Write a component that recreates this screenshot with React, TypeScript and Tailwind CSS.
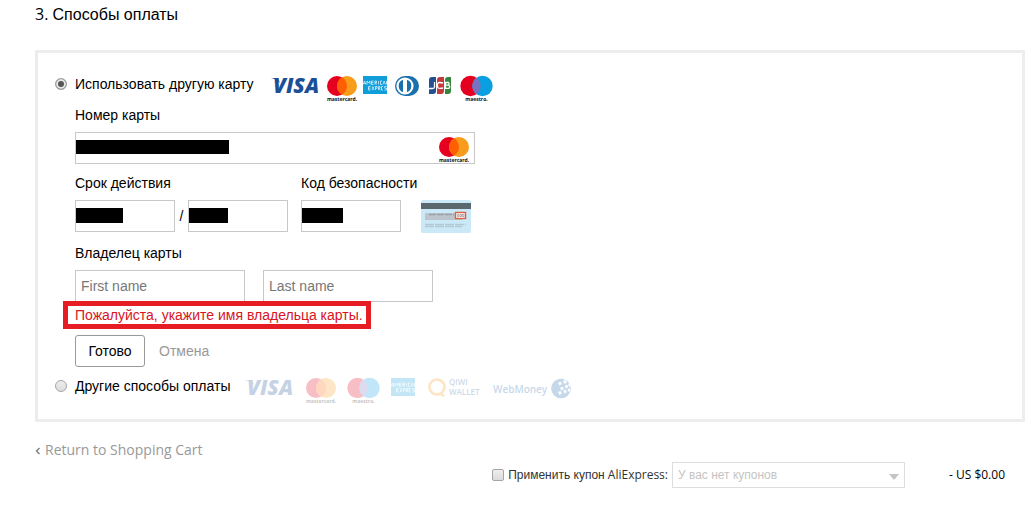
import React, { useState } from 'react';

const VisaLogo = () => (
  <svg width="50" height="26" viewBox="0 0 50 26" className="overflow-visible" role="img" aria-label="Visa">
    <text x="2" y="17" fontSize="21" fontWeight="800" fontStyle="italic" fontFamily="Open Sans, sans-serif" fill="#1d4f97">VISA</text>
    <path d="M0 2h7l2 5q-3-4-9-5z" fill="#1d4f97" />
  </svg>
);

const MastercardLogo = () => (
  <svg width="30" height="26" viewBox="0 0 30 26" className="overflow-visible" role="img" aria-label="Mastercard">
    <circle cx="10" cy="10" r="10" fill="#e6001f" />
    <circle cx="20" cy="10" r="10" fill="#f89c1c" />
    <path d="M15 1.34a10 10 0 0 1 0 17.32a10 10 0 0 1 0-17.32z" fill="#ff5f00" />
    <text x="15" y="25" fontSize="5" fontWeight="700" textAnchor="middle" fontFamily="Open Sans, sans-serif" fill="#111">mastercard.</text>
  </svg>
);

const MaestroLogo = () => (
  <svg width="33" height="26" viewBox="0 0 33 26" className="overflow-visible" role="img" aria-label="Maestro">
    <circle cx="10.5" cy="10" r="10.2" fill="#e6001f" />
    <circle cx="22.5" cy="10" r="10.2" fill="#0a9fe0" />
    <path d="M16.5 1.75a10.2 10.2 0 0 1 0 16.5a10.2 10.2 0 0 1 0-16.5z" fill="#7673c0" />
    <text x="16.5" y="25" fontSize="5" fontWeight="700" textAnchor="middle" fontFamily="Open Sans, sans-serif" fill="#111">maestro.</text>
  </svg>
);

const AmexLogo = () => (
  <svg width="26" height="26" viewBox="0 0 26 26" role="img" aria-label="American Express">
    <rect width="24" height="18" fill="#109edb" />
    <g fill="none" stroke="#d5effa" strokeWidth="0.8">
      <path d="M0 8.5l1.500-3.500 1.500 3.500M.5 7.500h2M4 8.500V5l1.500 2L7 5v3.500M10.500 5h-2v3.500h2M8.500 6.700h2M12 8.500V5h1.500v1.700H12l2 1.800M15.500 5v3.500M19 5h-1.500v3.500H19M20 8.500L21.200 5l1.200 3.500M23.500 8.500V5" />
      <path d="M7.500 10.500h-2V14h2M5.500 12.200h2M9 10.500l2 3.500M11 10.500L9 14M12.500 14v-3.500H14v1.800h-1.500M15.500 14v-3.500H17v1.800h-1.500l2 1.700M20 10.500h-1.500V14H20M23.500 10.500h-1.800v1.700h1.800V14h-2" />
    </g>
  </svg>
);

const DinersLogo = () => (
  <svg width="28" height="26" viewBox="0 0 28 26" role="img" aria-label="Diners Club">
    <path d="M10 0h4a10 10 0 0 1 0 20h-4a10 10 0 0 1 0-20z" fill="#1a70ad" />
    <circle cx="10" cy="10" r="8.600" fill="#fff" />
    <path d="M8 3.800a6.600 6.600 0 0 0 0 12.400zM12 3.800a6.600 6.600 0 0 1 0 12.400z" fill="#1a70ad" />
  </svg>
);

const JcbLogo = () => (
  <svg width="25" height="26" viewBox="0 0 25 26" role="img" aria-label="JCB">
    <path d="M3 1h4v14a3 3 0 0 1-3 3H0V4a3 3 0 0 1 3-3z" fill="#24508f" />
    <path d="M11 1h4v14a3 3 0 0 1-3 3H8V4a3 3 0 0 1 3-3z" fill="#c43a3c" />
    <path d="M19 1h3v14a3 3 0 0 1-3 3h-3V4a3 3 0 0 1 3-3z" fill="#37843f" />
    <path d="M5.500 6v5q0 1.500-2 1.500H0M14 7q-4-1-5 0-1.500 2.500 0 5 2 .8 5 0M16.500 6.500h3q1.200 1.300 0 2.600h-3zM16.500 9.200h3.500q1.300 1.600 0 3.200h-3.500z" fill="none" stroke="#fff" strokeWidth="1.300" />
  </svg>
);

const QiwiLogo = () => (
  <svg width="54" height="26" viewBox="0 0 54 26" className="overflow-visible" role="img" aria-label="Qiwi Wallet">
    <circle cx="9" cy="9" r="7.500" fill="none" stroke="#f59a1c" strokeWidth="2.600" />
    <path d="M11 15q3-1 6 3-3 2-6-3z" fill="#f59a1c" />
    <g fontSize="8" fontFamily="Open Sans, sans-serif" fontWeight="600" fill="#3d6ba3">
      <text x="21" y="7">QIWI</text>
      <text x="21" y="17">WALLET</text>
    </g>
  </svg>
);

const WebMoneyLogo = () => (
  <svg width="78" height="26" viewBox="0 0 78 26" role="img" aria-label="WebMoney">
    <text x="0" y="15" fontSize="10" fontWeight="600" fontFamily="Open Sans, sans-serif" fill="#1b66ad">WebMoney</text>
    <circle cx="68" cy="10.500" r="9.800" fill="#1b66ad" />
    <path d="M65 5l2.500-1.500L69 6l-2.500 1.500zM70 3l2.500-1L74 4.500 71.500 6zM75 6l2-1 1.500 3-2 1zM67 10l2.500-1.500L71 11l-2.500 1.500zM71.500 8L74 6.500 75.500 9 73 10.500zM65 14l2.500-1 1.500 2.500-2.500 1.500zM70 13l2.500-1.500L74 14l-2.500 1.500zM74.500 11.500l2.500-1.500v3l-1.500 1z" fill="#fff" />
  </svg>
);

const CvvCard = () => (
  <svg width="50" height="33" viewBox="0 0 50 33" role="img" aria-label="CVV">
    <rect width="50" height="33" rx="2" fill="#cbe8f7" />
    <rect y="3" width="50" height="6" fill="#5b676f" />
    <rect x="4" y="13" width="37" height="7" fill="#bcc5cb" />
    <path d="M8 14.500h25" stroke="#98a2a9" strokeWidth="1.500" strokeDasharray="7 1" />
    <rect x="34.500" y="12.500" width="10" height="6" fill="#fff" stroke="#dd5f42" strokeWidth="1.400" />
    <path d="M36.500 14.500h1.500v2h-1.500zM39 14.500h1.500v2H39zM41.500 14.500H43v2h-1.500z" fill="none" stroke="#8a7470" strokeWidth="0.600" />
    <path d="M4 24.500h41M4 26.500h37" stroke="#b4c8d4" strokeWidth="1.300" strokeDasharray="9 1" />
  </svg>
);

type MaskedInputProps = {
  id: string;
  label?: string;
  className: string;
  maskClass: string;
};

// field whose value is covered by a black bar
function MaskedInput({ id, label, className, maskClass }: MaskedInputProps) {
  return (
    <div className={`relative ${className}`}>
      <input id={id} type="text" aria-label={label} className="block w-full h-8 px-1 border border-[#c8c8c8] bg-white outline-none" />
      <span className={`absolute left-px top-2 bg-black ${maskClass}`} />
    </div>
  );
}

const radioClass =
  'appearance-none w-3 h-3 mt-2.5 ml-0.5 mr-2 shrink-0 rounded-full border border-[#a5a5a5] bg-linear-to-b from-[#eeeeee] to-[#dcdcdc] checked:bg-none checked:bg-[#555] checked:shadow-[inset_0_0_0_2px_#e6e6e6]';
const labelClass = 'block leading-[26px] mb-1';
const nameClass = 'w-[170px] h-8 px-[5px] border border-[#c8c8c8] placeholder:text-[#777] outline-none';

export default function App() {
  const [method, setMethod] = useState('card');
  const [firstName, setFirstName] = useState('');
  const [lastName, setLastName] = useState('');

  return (
    <main className="bg-white pl-[35px] pr-2.5 text-sm text-black font-['Liberation_Sans',Arial,sans-serif]">
      <h2 className="text-base leading-7 mb-[21px]">
        <span className="font-['Open_Sans',sans-serif]">3. </span>Способы оплаты
      </h2>

      <form className="border-3 border-[#ededed] p-[15px]" onSubmit={e => e.preventDefault()}>
        <div className="flex items-start">
          <input id="card" type="radio" name="method" className={radioClass} checked={method === 'card'} onChange={() => setMethod('card')} />
          <label htmlFor="card" className="leading-8">Использовать другую карту</label>
          <div className="flex gap-1.5 pt-2 ml-[17px]">
            <VisaLogo />
            <MastercardLogo />
            <AmexLogo />
            <DinersLogo />
            <JcbLogo />
            <MaestroLogo />
          </div>
        </div>

        <div className="pl-[22px]">
          <div className="mb-1.5">
            <label htmlFor="number" className={labelClass}>Номер карты</label>
            <div className="relative w-[400px]">
              <MaskedInput id="number" className="w-full" maskClass="w-[153px] h-3.5" />
              <div className="absolute right-1.5 top-[5px]">
                <MastercardLogo />
              </div>
            </div>
          </div>

          <div className="flex items-end mb-2">
            <div>
              <label htmlFor="month" className={labelClass}>Срок действия</label>
              <div className="flex items-center">
                <MaskedInput id="month" className="w-[100px]" maskClass="w-[47px] h-[15px]" />
                <span className="w-[13px] text-center">/</span>
                <MaskedInput id="year" label="Год" className="w-[100px]" maskClass="w-[39px] h-[15px]" />
              </div>
            </div>
            <div className="ml-[13px]">
              <label htmlFor="cvv" className={labelClass}>Код безопасности</label>
              <div className="flex h-8 gap-5">
                <MaskedInput id="cvv" className="w-[100px]" maskClass="w-[41px] h-[15px]" />
                <CvvCard />
              </div>
            </div>
          </div>

          <div>
            <label htmlFor="first" className={labelClass}>Владелец карты</label>
            <div className="flex gap-[18px]">
              <input id="first" type="text" placeholder="First name" value={firstName} onChange={e => setFirstName(e.target.value)} className={nameClass} />
              <input type="text" aria-label="Last name" placeholder="Last name" value={lastName} onChange={e => setLastName(e.target.value)} className={nameClass} />
            </div>
          </div>

          <p className="relative w-fit -mt-px -ml-3 mb-1.5 pl-[7px] pr-[3px] border-5 border-[#e71d25] leading-[18px] text-[#d8141c]">
            Пожалуйста, укажите имя владельца карты.
          </p>

          <div className="flex items-center gap-3.5 mb-[3px]">
            <button type="submit" className="w-[70px] h-8 border border-[#999] rounded-[3px] bg-white">Готово</button>
            <button type="button" className="text-[#999]">Отмена</button>
          </div>
        </div>

        <div className="flex items-start">
          <input id="other" type="radio" name="method" className={radioClass} checked={method === 'other'} onChange={() => setMethod('other')} />
          <label htmlFor="other" className="leading-8">Другие способы оплаты</label>
          <div className="flex gap-[11px] pt-2 ml-[15px] opacity-25">
            <VisaLogo />
            <MastercardLogo />
            <MaestroLogo />
            <AmexLogo />
            <QiwiLogo />
            <WebMoneyLogo />
          </div>
        </div>
      </form>

      <div className="mt-4 leading-6 text-[#999] font-['Open_Sans',sans-serif]">
        <a href="#" className="inline-flex items-center gap-1">
          <svg width="6" height="8" viewBox="0 0 6 8" className="mt-0.5" aria-hidden="true">
            <path d="M4.500 1L1.500 4l3 3" fill="none" stroke="#777" strokeWidth="1.300" />
          </svg>
          Return to Shopping Cart
        </a>
      </div>

      <div className="flex items-center justify-end pr-5 text-xs text-[#333] font-['Open_Sans',sans-serif]">
        <input id="coupon" type="checkbox" className="appearance-none w-3 h-3 mr-1 rounded-xs border border-[#a5a5a5] bg-linear-to-b from-[#eeeeee] to-[#dcdcdc] checked:bg-[#666]" />
        <label htmlFor="coupon">
          <span className="font-['Liberation_Sans',Arial,sans-serif]">Применить купон</span> AliExpress:
        </label>
        <div className="relative ml-1">
          <select aria-label="Купон" disabled className="block appearance-none w-[233px] h-[26px] px-[5px] border border-[#ddd] bg-white text-[#c4c4c4] opacity-100 font-['Liberation_Sans',Arial,sans-serif]">
            <option>У вас нет купонов</option>
          </select>
          <svg width="10" height="6" viewBox="0 0 10 6" className="absolute right-1.5 top-3 pointer-events-none" aria-hidden="true">
            <path d="M0 0h10L5 6z" fill="#c4c4c4" />
          </svg>
        </div>
        <span className="w-[100px] text-right text-black">- US $0.00</span>
      </div>
    </main>
  );
}
